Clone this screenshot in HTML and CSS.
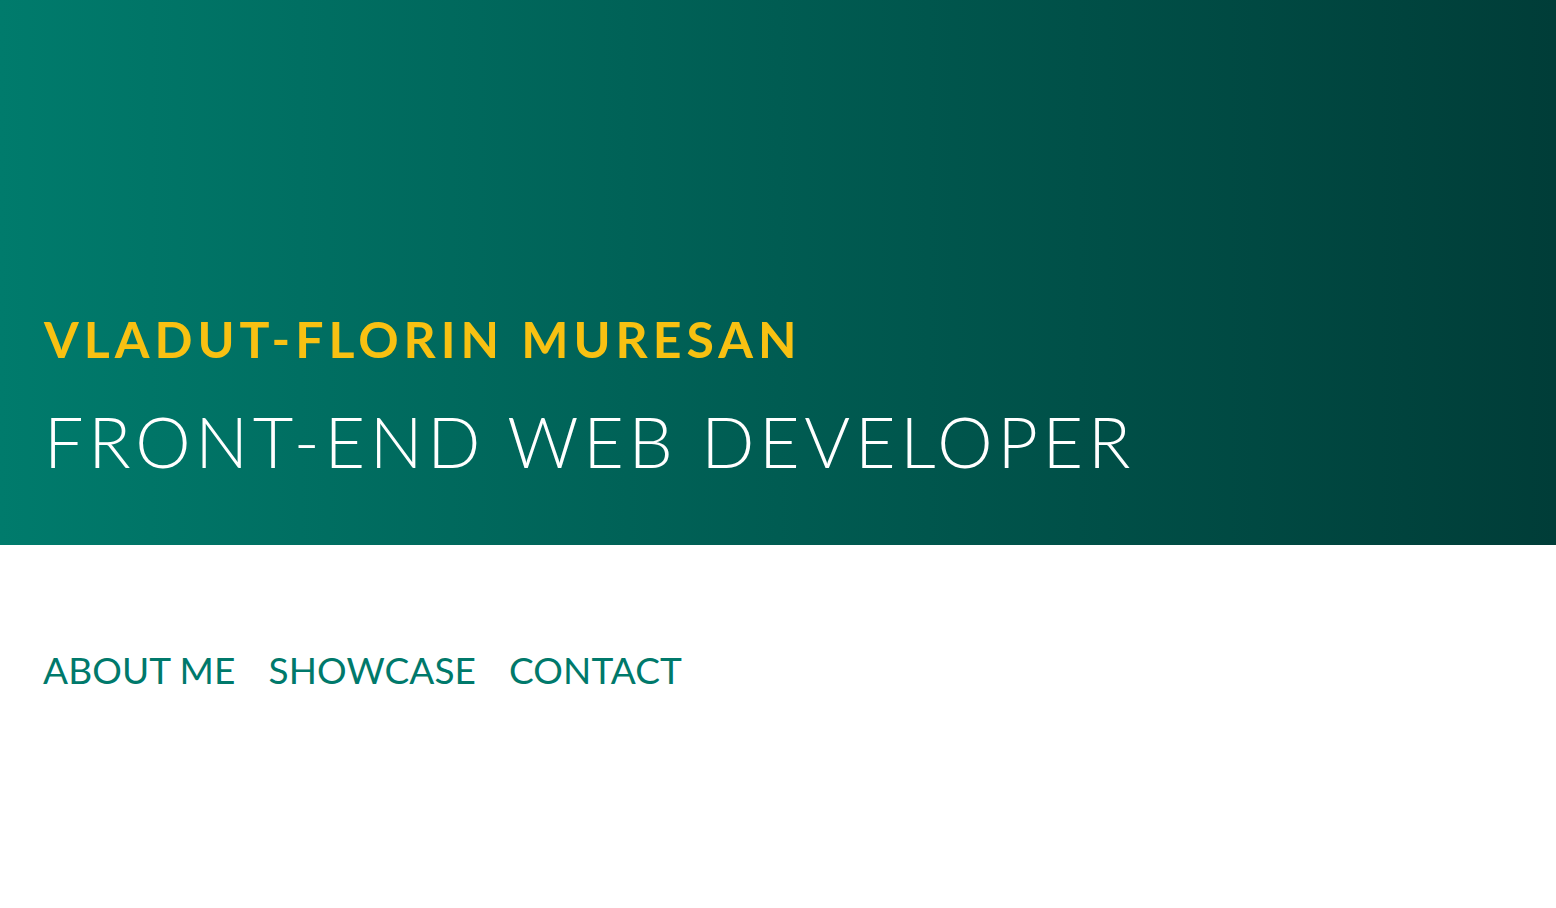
FILE: index.html
```html
<!DOCTYPE html>
<html lang="en">
<head>
<meta charset="utf-8">
<title>Vladut-Florin Muresan</title>
<link rel="stylesheet" href="styles.css">
</head>
<body>
<header class="hero">
  <div class="hero-inner">
    <h1 class="name">VLADUT-FLORIN MURESAN</h1>
    <h2 class="role">FRONT-END WEB DEVELOPER</h2>
  </div>
</header>
<nav class="nav">
  <a href="#about">ABOUT ME</a>
  <a href="#showcase">SHOWCASE</a>
  <a href="#contact">CONTACT</a>
</nav>
</body>
</html>
```
FILE: styles.css
```css
* { box-sizing: border-box; }
html, body { margin: 0; padding: 0; }
body {
  font-family: Lato, "Open Sans", sans-serif;
  background: #fff;
}
.hero {
  height: 545px;
  background: linear-gradient(to right, #007b6c 0%, #003d38 100%);
  display: flex;
  align-items: flex-end;
}
.hero-inner {
  padding: 0 0 69px 44px;
}
.name {
  margin: 0;
  font-size: 50px;
  font-weight: 700;
  color: #f8c112;
  letter-spacing: 5px;
  line-height: 1;
}
.role {
  margin: 42px 0 0 0;
  font-size: 70px;
  font-weight: 300;
  color: #fff;
  letter-spacing: 4.7px;
  line-height: 1;
}
.nav {
  display: flex;
  gap: 33px;
  padding: 106px 0 0 43px;
}
.nav a {
  color: #00796b;
  text-decoration: none;
  font-size: 37px;
  font-weight: 400;
  letter-spacing: 0.1px;
  line-height: 1;
}
```
